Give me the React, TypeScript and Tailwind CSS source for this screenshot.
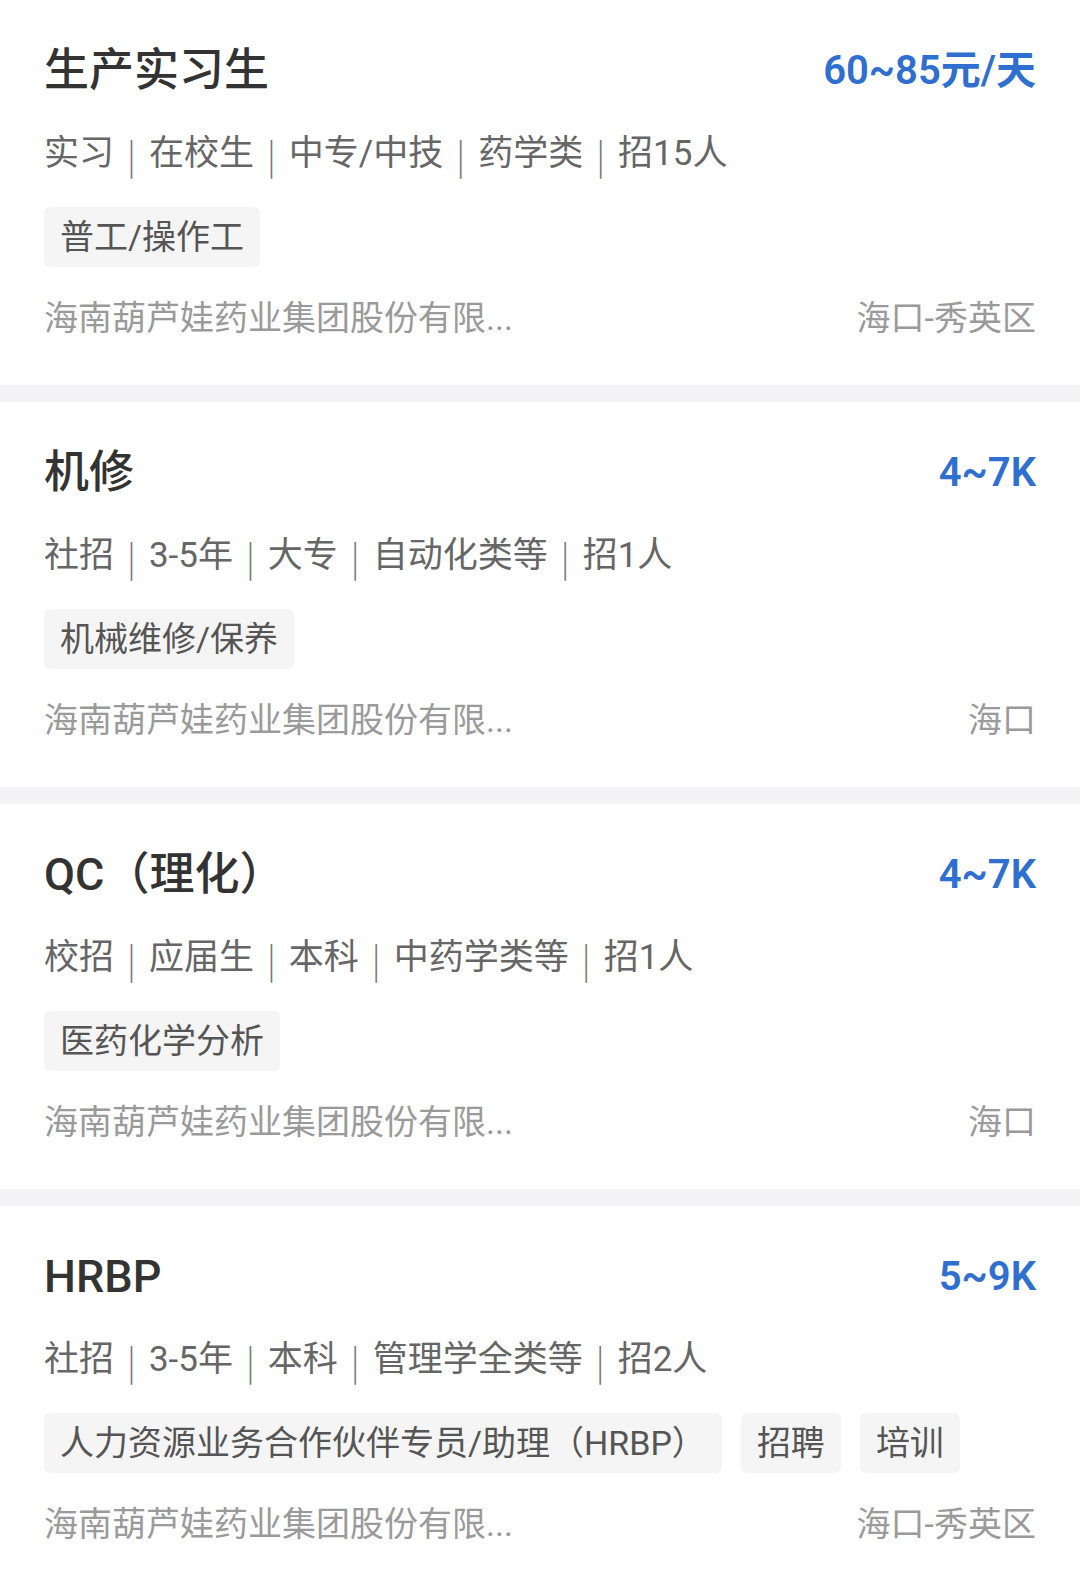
import React from "react";

type Job = {
  title: string;
  salary: string;
  info: string[];
  tags: string[];
  company: string;
  location: string;
};

const jobs: Job[] = [
  {
    title: "生产实习生",
    salary: "60~85元/天",
    info: ["实习", "在校生", "中专/中技", "药学类", "招15人"],
    tags: ["普工/操作工"],
    company: "海南葫芦娃药业集团股份有限...",
    location: "海口-秀英区",
  },
  {
    title: "机修",
    salary: "4~7K",
    info: ["社招", "3-5年", "大专", "自动化类等", "招1人"],
    tags: ["机械维修/保养"],
    company: "海南葫芦娃药业集团股份有限...",
    location: "海口",
  },
  {
    title: "QC（理化）",
    salary: "4~7K",
    info: ["校招", "应届生", "本科", "中药学类等", "招1人"],
    tags: ["医药化学分析"],
    company: "海南葫芦娃药业集团股份有限...",
    location: "海口",
  },
  {
    title: "HRBP",
    salary: "5~9K",
    info: ["社招", "3-5年", "本科", "管理学全类等", "招2人"],
    tags: ["人力资源业务合作伙伴专员/助理（HRBP）", "招聘", "培训"],
    company: "海南葫芦娃药业集团股份有限...",
    location: "海口-秀英区",
  },
];

const font = {
  fontFamily: 'Roboto, "Noto Sans CJK SC", "Noto Sans", sans-serif',
};

const cjk = {
  fontFamily: '"Noto Sans CJK SC", sans-serif',
};

function Card({ job }: { job: Job }) {
  return (
    <div className="h-[385px] bg-white px-[44px] pt-[41px] flex flex-col">
      <div className="h-[60px] flex items-center justify-between">
        <div className="text-[45px] leading-[60px] font-medium text-[#333333]">
          {job.title}
        </div>
        <div className="text-[40px] leading-[60px] font-semibold text-[#2f6fd0]">
          {job.salary}
        </div>
      </div>
      <div className="mt-[29px] h-[48px] flex items-center text-[35px] leading-[48px] text-[#666666] whitespace-nowrap">
        {job.info.map((s, i) => (
          <React.Fragment key={i}>
            {i > 0 && (
              <span className="mx-[13px] font-light text-[#777777]" style={cjk}>
                |
              </span>
            )}
            <span>{s}</span>
          </React.Fragment>
        ))}
      </div>
      <div className="mt-[29px] h-[60px] flex gap-[19px]">
        {job.tags.map((t, i) => (
          <div
            key={i}
            className="h-[60px] px-[16px] rounded-[6px] bg-[#f5f5f5] text-[34px] leading-[60px] text-[#555555] whitespace-nowrap"
          >
            {t}
          </div>
        ))}
      </div>
      <div className="mt-[27px] h-[48px] flex items-center justify-between text-[34px] leading-[48px] text-[#9a9a9a] whitespace-nowrap">
        <span>{job.company}</span>
        <span>{job.location}</span>
      </div>
    </div>
  );
}

export default function App() {
  return (
    <div className="w-[1080px] bg-white" style={font}>
      {jobs.map((job, i) => (
        <React.Fragment key={i}>
          {i > 0 && <div className="h-[17px] bg-[#f4f4f6]" />}
          <Card job={job} />
        </React.Fragment>
      ))}
    </div>
  );
}
